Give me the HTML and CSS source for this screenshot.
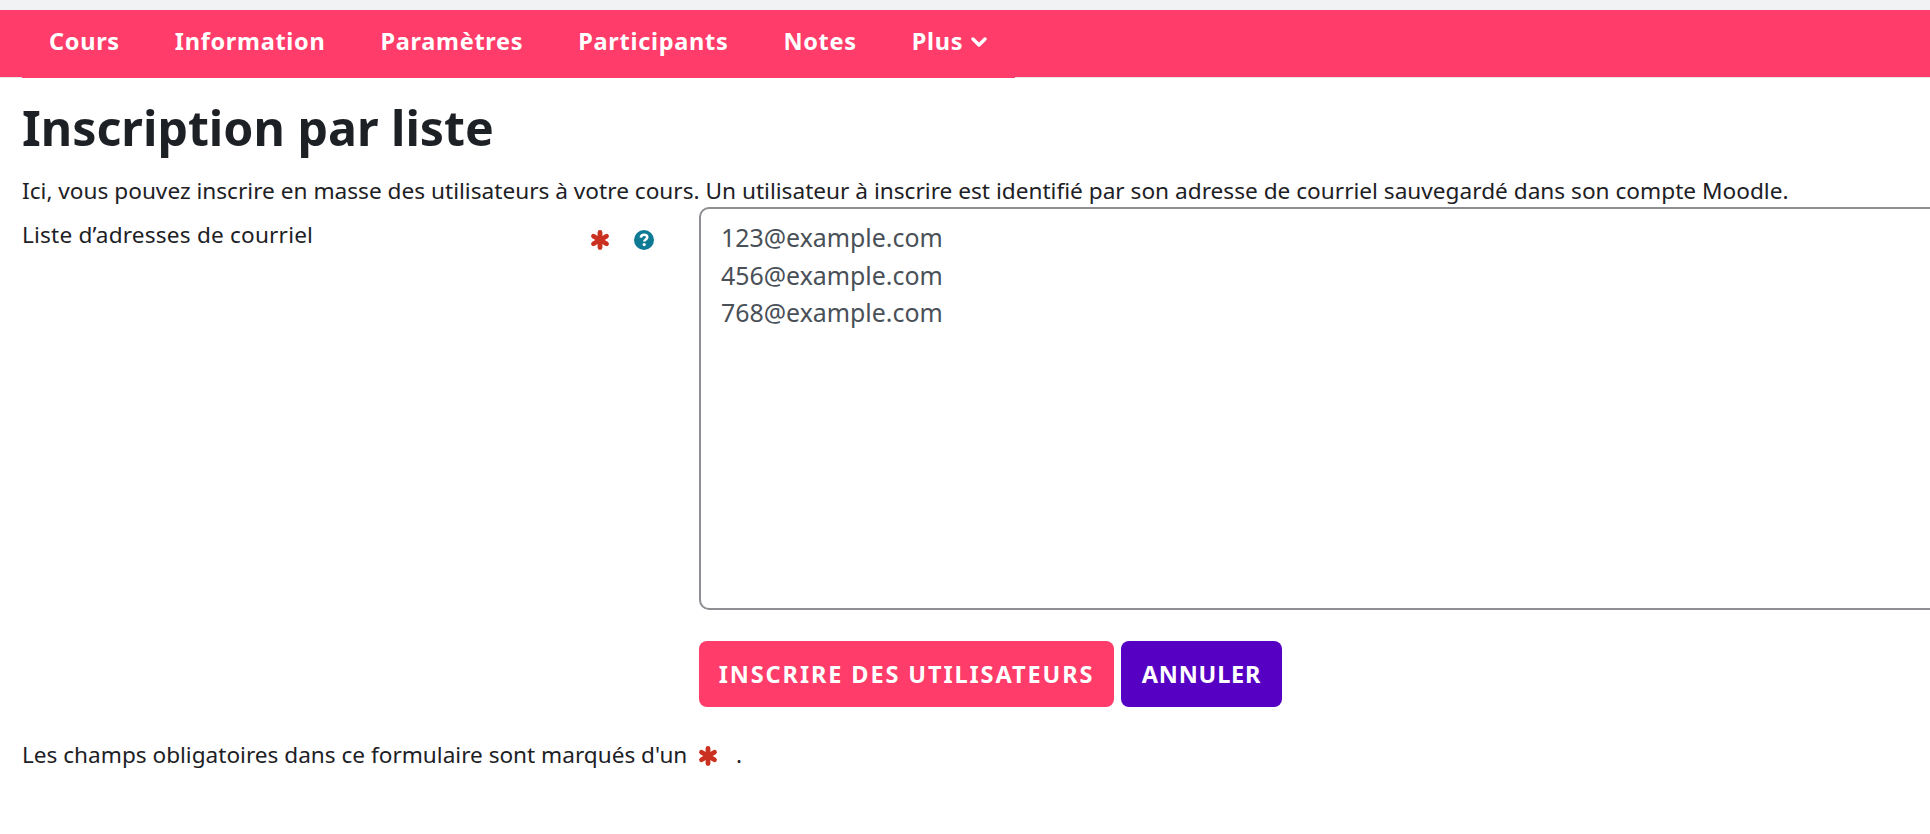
FILE: index.html
```html
<!DOCTYPE html>
<html lang="fr">
<head>
<meta charset="utf-8">
<title>Inscription par liste</title>
<link rel="stylesheet" href="styles.css">
</head>
<body>
<div class="page">
  <nav class="topnav">
    <ul class="tabs">
      <li>Cours</li>
      <li>Information</li>
      <li>Paramètres</li>
      <li>Participants</li>
      <li>Notes</li>
      <li class="more">Plus
        <svg class="chev" viewBox="0 0 16 11" width="16" height="11"><path d="M2 2l6 6 6-6" fill="none" stroke="#fff" stroke-width="3.4" stroke-linecap="round" stroke-linejoin="round"/></svg>
      </li>
    </ul>
  </nav>
  <main class="content">
    <h1 class="title">Inscription par liste</h1>
    <p class="intro">Ici, vous pouvez inscrire en masse des utilisateurs à votre cours. Un utilisateur à inscrire est identifié par son adresse de courriel sauvegardé dans son compte Moodle.</p>
    <form class="form">
      <div class="label-col">
        <label class="label" for="emails">Liste d’adresses de courriel</label>
        <div class="icons">
          <svg class="star" viewBox="0 0 20 20" width="20" height="22"><g stroke="#ca3120" stroke-width="4.8" stroke-linecap="round"><path d="M10 2.5v15"/><path d="M3.5 6.2l13 7.6"/><path d="M16.5 6.2l-13 7.6"/></g></svg>
          <svg class="help" viewBox="0 0 20 20" width="20" height="20"><circle cx="10" cy="10" r="10" fill="#0f7a94"/><path d="M6.8 7.6c.2-1.9 1.5-2.9 3.3-2.9 1.9 0 3.2 1.1 3.2 2.6 0 2.3-3 2.2-3 4.3" fill="none" stroke="#fff" stroke-width="2.5"/><circle cx="10.2" cy="14.6" r="1.6" fill="#fff"/></svg>
        </div>
      </div>
      <div class="field-col">
        <textarea id="emails" class="emails" spellcheck="false">123@example.com
456@example.com
768@example.com</textarea>
        <div class="actions">
          <button type="button" class="btn btn-primary">Inscrire des utilisateurs</button>
          <button type="button" class="btn btn-secondary">Annuler</button>
        </div>
      </div>
    </form>
    <p class="required-note">Les champs obligatoires dans ce formulaire sont marqués d'un
      <svg class="star note-star" viewBox="0 0 20 20" width="20" height="22"><g stroke="#ca3120" stroke-width="4.8" stroke-linecap="round"><path d="M10 2.5v15"/><path d="M3.5 6.2l13 7.6"/><path d="M16.5 6.2l-13 7.6"/></g></svg>
      <span class="dot">.</span></p>
  </main>
</div>
</body>
</html>
```
FILE: styles.css
```css
* { box-sizing: border-box; }
html, body { margin: 0; padding: 0; height: 100%; overflow: hidden; background: #fff; }
body { font-family: "Noto Sans", "Liberation Sans", sans-serif; color: #1d2125; }
.page { width: 1930px; height: 834px; overflow: hidden; padding-top: 10px; background: linear-gradient(#f1f2f4 10px, #fff 10px); }
.topnav { background: #ff3c6a; height: 68px; border-bottom: 1px solid #e6e6ea; padding-left: 22px; }
.tabs { list-style: none; margin: 0; padding: 0; display: flex; width: 993px; height: 68px; background: #ff3c6a; color: #fff; font-size: 23.5px; font-weight: 700; letter-spacing: 0.7px; align-items: center; padding: 0 0 7px 27px; gap: 55px; }
.more { display: flex; align-items: center; gap: 8px; }
.chev { margin-top: 3px; }
.content { padding: 0 0 0 22px; }
.title { margin: 19px 0 0; font-size: 48.3px; line-height: 60px; font-weight: 700; color: #1d2125; }
.intro { margin: 19px 0 0; font-size: 22.65px; line-height: 30px; white-space: nowrap; }
.form { display: flex; margin-top: 1px; }
.label-col { flex: none; width: 677px; display: flex; padding-top: 13px; }
.label { font-size: 22.6px; line-height: 30px; width: 568px; letter-spacing: 0.2px; }
.icons { display: flex; gap: 24px; align-items: center; height: 30px; margin-top: 5px; }
.field-col { flex: none; width: 1300px; }
.emails { display: block; width: 1300px; height: 403px; border: 2px solid #8e8e93; border-radius: 10px; padding: 10px 20px; font: 400 24.9px/37.7px "Noto Sans", sans-serif; color: #495057; resize: none; overflow: hidden; outline: none; }
.actions { display: flex; gap: 7px; margin-top: 31px; }
.btn { height: 66px; border: 0; border-radius: 8px; color: #fff; font: 700 23.5px "Noto Sans", sans-serif; text-transform: uppercase; padding: 0; }
.btn-primary { background: #ff3c6a; width: 415px; letter-spacing: 1.9px; }
.btn-secondary { background: #5600c4; width: 161px; letter-spacing: 0.8px; }
.required-note { margin: 33px 0 0; font-size: 22.6px; line-height: 30px; white-space: nowrap; }
.note-star { vertical-align: -4px; margin: 0 12px 0 5px; }
```
